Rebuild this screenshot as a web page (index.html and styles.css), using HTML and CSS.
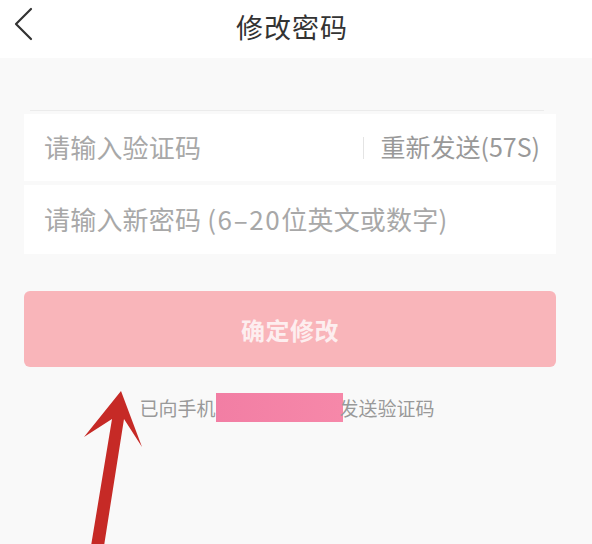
FILE: index.html
```html
<!DOCTYPE html>
<html lang="zh-CN">
<head>
<meta charset="utf-8">
<title>修改密码</title>
<link rel="stylesheet" href="styles.css">
</head>
<body>
<div class="page">
  <header class="topbar">
    <span class="back">
      <svg width="20" height="34" viewBox="0 0 20 34"><polyline points="17,2 2,17 17,32" fill="none" stroke="#333" stroke-width="2.2" stroke-linecap="round" stroke-linejoin="round"/></svg>
    </span>
    <h1 class="title">修改密码</h1>
  </header>
  <main class="content">
    <div class="rule"></div>
    <div class="field">
      <span class="placeholder">请输入验证码</span>
      <span class="divider"></span>
      <span class="resend">重新发送(57S)</span>
    </div>
    <div class="field field-second">
      <span class="placeholder">请输入新密码 <span class="latin">(6–20</span>位英文或数字)</span>
    </div>
    <button class="submit">确定修改</button>
    <p class="note">已向手机<span class="mask"></span><span class="after">发送验证码</span></p>
  </main>
  <svg class="arrow" width="592" height="544" viewBox="0 0 592 544">
    <polygon points="121,391 142,447 124,419 104,546 91,546 112,419 84,437" fill="#c62a26"/>
  </svg>
</div>
</body>
</html>
```
FILE: styles.css
```css
html, body {
  margin: 0;
  padding: 0;
}
body {
  font-family: "Noto Sans CJK SC", "Noto Sans", sans-serif;
  background: #f9f9f9;
}
.page {
  position: relative;
  width: 592px;
  height: 544px;
  overflow: hidden;
  background: #f9f9f9;
}
.topbar {
  height: 58px;
  background: #ffffff;
  display: flex;
  align-items: center;
  justify-content: center;
  position: relative;
}
.back {
  position: absolute;
  left: 14px;
  top: 7px;
  display: flex;
}
.title {
  margin: 0;
  font-size: 27px;
  font-weight: 400;
  color: #333;
  letter-spacing: 1px;
  line-height: 1;
  margin-top: -6px;
  margin-left: -8px;
}
.content {
  padding: 0 36px 0 24px;
  display: flex;
  flex-direction: column;
}
.rule {
  height: 1px;
  background: #ebebeb;
  margin: 52px 12px 0 6px;
}
.field {
  margin-top: 3px;
  height: 67px;
  background: #ffffff;
  display: flex;
  align-items: center;
  padding: 0 16px 0 20px;
}
.field-second {
  margin-top: 4px;
  height: 69px;
}
.placeholder {
  font-size: 26px;
  color: #a8a8a8;
  flex: 1;
  letter-spacing: 0.2px;
  margin-top: -3px;
}
.latin {
  letter-spacing: 1.6px;
}
.divider {
  width: 1px;
  height: 22px;
  background: #e4e4e4;
  margin-right: 16px;
}
.resend {
  font-size: 25px;
  color: #999;
  margin-top: -3px;
}
.submit {
  margin-top: 37px;
  height: 76px;
  border: none;
  border-radius: 6px;
  background: #f9b5ba;
  color: #fdeeef;
  font-family: inherit;
  font-size: 24px;
  font-weight: 700;
  letter-spacing: 0.5px;
  padding: 0;
}
.note {
  margin: 26px 0 0;
  text-align: center;
  font-size: 19px;
  color: #999;
  line-height: 29px;
  padding: 0 6px 0 0;
}
.mask {
  display: inline-block;
  width: 127px;
  height: 29px;
  vertical-align: top;
  background: linear-gradient(90deg, #f27ea4, #f688a9);
}
.after {
  margin-left: -3px;
}
.arrow {
  position: absolute;
  left: 0;
  top: 0;
  pointer-events: none;
}
```
